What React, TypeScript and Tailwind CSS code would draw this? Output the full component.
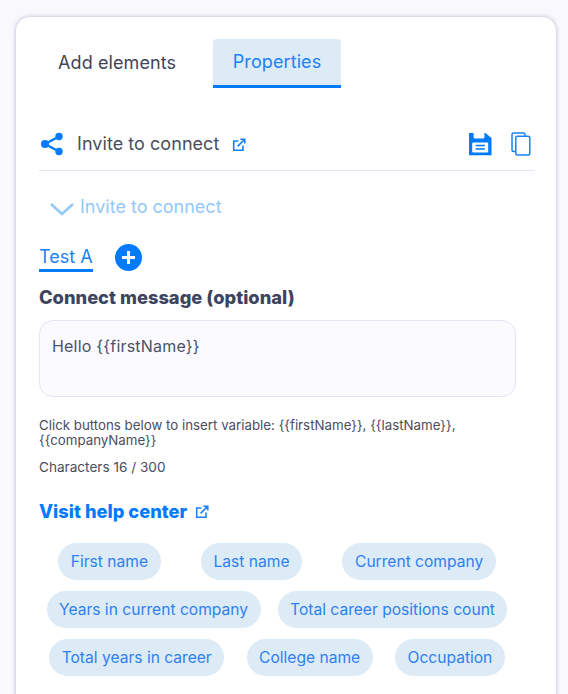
import React from 'react'

const variables = [
  ['First name', 'Last name', 'Current company'],
  ['Years in current company', 'Total career positions count'],
  ['Total years in career', 'College name', 'Occupation'],
]

const ExternalIcon = ({ className }: { className: string }) => (
  <svg className={className} viewBox="0 0 14 14" fill="none" stroke="currentColor" strokeWidth="1.6">
    <path d="M11 7.6v4.7H1.7V3H6.4" />
    <path d="M5.6 8.4 12.6 1.4M8.4 1.2h4.4v4.4" />
  </svg>
)

export default function App() {
  return (
    <div className="h-[694px] overflow-hidden bg-[#f8f8fd] pt-[17px] pl-4 pr-3 font-['Inter',sans-serif]">
      <div className="h-[700px] w-[540px] rounded-t-[14px] bg-white pt-[22px] pl-[23px] pr-[21px] shadow-[0_0_4px_rgba(90,100,140,0.45)]">
        {/* Tabs */}
        <div className="flex">
          <button className="h-[49px] w-[174px] pb-0.5 pl-[19px] text-left text-lg tracking-[0.1px] text-[#3f4458]">Add elements</button>
          <button className="h-[49px] w-[128px] rounded-t border-b-[3px] border-[#007bff] bg-[#dcebf5] text-lg tracking-[0.1px] text-[#1a82f5]">Properties</button>
        </div>

        {/* Step header */}
        <div className="mt-[33px] flex h-[50px] items-center border-b border-[#e2e6f2] pb-1 pl-px pr-1">
          <svg className="h-[24px] w-[24px] text-[#007bff]" viewBox="0 0 24 24" fill="currentColor">
            <circle cx="19" cy="4.5" r="3.7" />
            <circle cx="19" cy="19.5" r="3.7" />
            <circle cx="5" cy="12" r="4" />
            <path d="M5 12 19 4.5M5 12l14 7.5" stroke="currentColor" strokeWidth="2.4" />
          </svg>
          <span className="ml-[13px] text-lg leading-[26px] tracking-[0.05px] text-[#4a4d60]">Invite to connect</span>
          <ExternalIcon className="ml-[13px] mt-0.5 h-[14px] w-[14px] text-[#1a82f5]" />
          <svg className="ml-auto h-[24px] w-[24px] text-[#007bff]" viewBox="0 0 24 24">
            <path fill="currentColor" d="M1 1h4.6v4.2q0 1.4 1.4 1.4h8q1.4 0 1.4-1.4V1l1 .1L23.500 6v17.200H1z" />
            <rect x="4.200" y="10.500" width="16" height="10" rx="1.200" fill="#fff" />
            <path d="M7.600 13.500h9.200M7.600 16.900h9.200" stroke="#007bff" strokeWidth="1.500" />
          </svg>
          <svg className="ml-[19px] h-[24px] w-[20px] text-[#1a82f5]" viewBox="0 0 20 24" fill="none" stroke="currentColor" strokeWidth="1.500">
            <path d="M4.500 19.500H2.500q-1.500 0-1.500-1.500V2.500Q1 1 2.500 1h10q1.500 0 1.500 1.500V4" />
            <rect x="4.800" y="4.200" width="14" height="18.800" rx="1.500" />
          </svg>
        </div>

        {/* Step name */}
        <div className="mt-[22px] flex items-center pl-[11px] text-[#93c8fb]">
          <svg className="mt-1 h-[14px] w-[24px]" viewBox="0 0 24 14" fill="none" stroke="currentColor" strokeWidth="2.600">
            <path d="M1 2l11 10L23 2" />
          </svg>
          <span className="ml-[6px] text-lg leading-[28px]">Invite to connect</span>
        </div>

        {/* Test variants */}
        <div className="mt-[21px] flex items-center">
          <span className="h-[30px] border-b-[3px] border-[#007bff] text-lg leading-[30px] text-[#1a82f5]">Test A</span>
          <button className="ml-[22px] flex h-[27px] w-[27px] items-center justify-center rounded-full bg-[#007bff]">
            <svg className="h-[15px] w-[15px]" viewBox="0 0 15 15" stroke="#fff" strokeWidth="3">
              <path d="M7.500 1v13M1 7.500h13" />
            </svg>
          </button>
        </div>

        {/* Message */}
        <h3 className="mt-[12px] text-[18.3px] font-extrabold leading-[26px] text-[#3e4460]">Connect message (optional)</h3>
        <textarea
          readOnly
          value="Hello {{firstName}}"
          className="mt-[10px] block h-[77px] w-[477px] resize-none rounded-[14px] border border-[#e2e6f2] bg-[#fafaff] px-3 pt-[13px] text-base leading-6 tracking-[0.2px] text-[#4d5068] outline-none"
        />
        <p className="mt-[21px] text-[13.3px] leading-[15px] text-[#4a4d60]">
          Click buttons below to insert variable: {'{{firstName}}'}, {'{{lastName}}'}, {'{{companyName}}'}
        </p>
        <p className="mt-[7px] text-[13.6px] leading-[24px] text-[#4a4d60]">Characters 16 / 300</p>

        <a className="mt-[20px] flex h-[26px] items-center text-[18.3px] font-extrabold text-[#007bff]">
          Visit help center
          <ExternalIcon className="ml-2 h-[14px] w-[14px] text-[#1a82f5]" />
        </a>

        {/* Variable buttons */}
        <div className="-ml-px mt-[18px] flex w-[478px] flex-col gap-[11px]">
          {variables.map((row) => (
            <div key={row[0]} className="flex justify-around">
              {row.map((name) => (
                <button key={name} className="h-[37px] rounded-full bg-[#dcebf5] px-[12.5px] text-[15.6px] text-[#2f80f0]">
                  {name}
                </button>
              ))}
            </div>
          ))}
        </div>
      </div>
    </div>
  )
}
